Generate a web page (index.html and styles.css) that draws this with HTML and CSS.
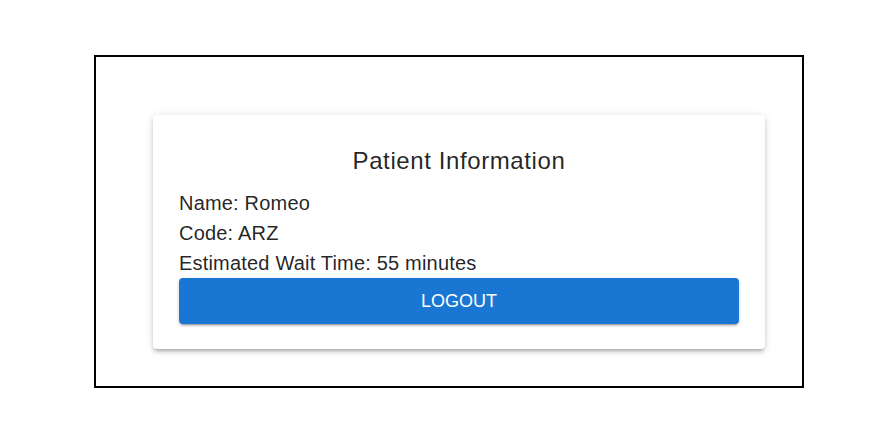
FILE: index.html
```html
<!DOCTYPE html>
<html>
<head>
<meta charset="utf-8">
<link rel="stylesheet" href="styles.css">
</head>
<body>
<div class="frame">
  <div class="card">
    <h2 class="title">Patient Information</h2>
    <div class="info">
      <p class="line">Name: Romeo</p>
      <p class="line">Code: ARZ</p>
      <p class="line">Estimated Wait Time: 55 minutes</p>
    </div>
    <button class="logout">LOGOUT</button>
  </div>
</div>
</body>
</html>
```

FILE: styles.css
```css
html, body {
  margin: 0;
  padding: 0;
  background: #ffffff;
  font-family: "Liberation Sans", Arial, sans-serif;
  color: rgba(0, 0, 0, 0.87);
}

.frame {
  box-sizing: border-box;
  width: 710px;
  height: 333px;
  margin: 55px 0 0 94px;
  border: 2px solid #000;
  padding: 58px 37px 0 57px;
}

.card {
  box-sizing: border-box;
  width: 612px;
  background: #fff;
  border-radius: 4px;
  padding: 30px 26px 25px 26px;
  box-shadow: 0px 3px 3px -2px rgba(0,0,0,0.2), 0px 3px 4px 0px rgba(0,0,0,0.14), 0px 1px 8px 0px rgba(0,0,0,0.12);
}

.title {
  margin: 0 0 11px 0;
  font-size: 24px;
  font-weight: 400;
  line-height: 32px;
  letter-spacing: 0.6px;
  text-align: center;
}

.info {
  display: flex;
  flex-direction: column;
}

.line {
  margin: 0;
  font-size: 20px;
  line-height: 30px;
  letter-spacing: 0.19px;
}

.logout {
  display: block;
  width: 100%;
  height: 46px;
  border: none;
  border-radius: 4px;
  background: #1976d2;
  color: #fff;
  font-family: "Liberation Sans", Arial, sans-serif;
  font-size: 18px;
  font-weight: 400;
  padding: 0;
  box-shadow: 0px 3px 1px -2px rgba(0,0,0,0.2), 0px 2px 2px 0px rgba(0,0,0,0.14), 0px 1px 5px 0px rgba(0,0,0,0.12);
}
```
